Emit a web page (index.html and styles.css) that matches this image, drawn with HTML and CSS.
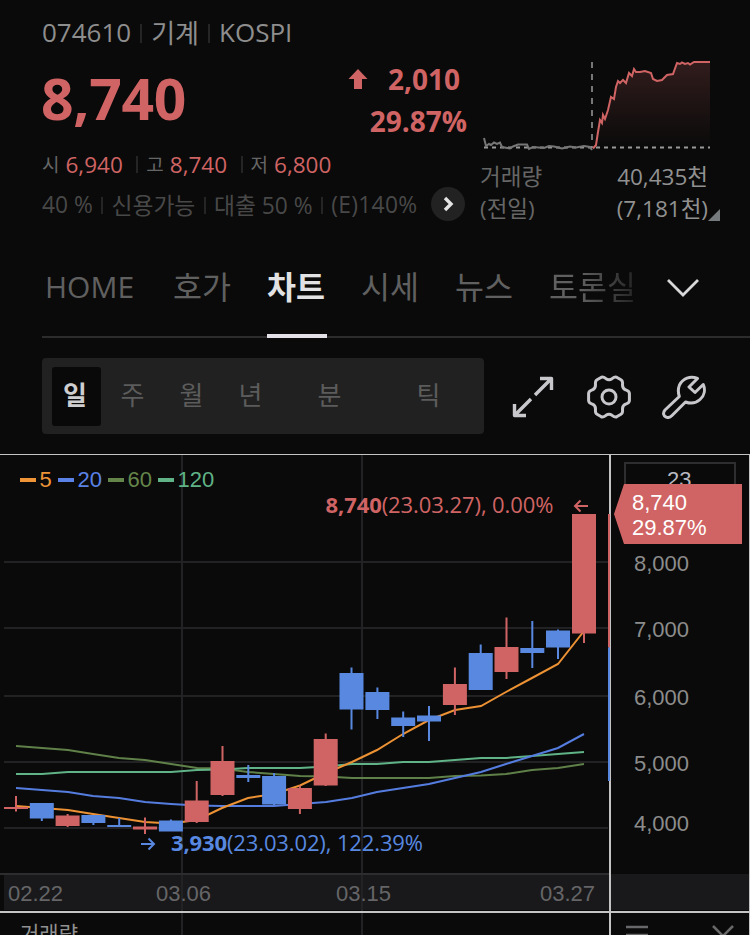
FILE: index.html
```
<!DOCTYPE html>
<html lang="ko">
<head>
  <meta charset="utf-8">
  <meta name="viewport" content="width=device-width, initial-scale=1">
  <title>074610</title>
  <link rel="stylesheet" href="styles.css">
</head>
<body>
  <div class="wrap">

    <div class="quote">
      <div class="quote-left">
        <div class="row info">
          <span>074610</span><i class="bar"></i><span class="kr">기계</span><i class="bar"></i><span>KOSPI</span>
        </div>
        <div class="row price">
          <strong>8,740</strong>
          <div class="change">
            <div class="diff">
              <svg width="20" height="20" viewBox="0 0 20 20"><path d="M10 0L19.500 10H14V20H6V10H.5z" fill="#d06464"/></svg>
              <span>2,010</span>
            </div>
            <div class="rate">29.87%</div>
          </div>
        </div>
        <div class="row ohl">
          <em>시</em><span>6,940</span><i class="bar"></i><em>고</em><span>8,740</span><i class="bar"></i><em>저</em><span>6,800</span>
        </div>
        <div class="row credit">
          <span>40 %</span><i class="bar"></i><span>신용가능</span><i class="bar"></i><span>대출 50 %</span><i class="bar"></i><span class="last">(E)140%</span>
          <button class="more"><svg width="34" height="34" viewBox="0 0 34 34"><path d="M14 11l6 6-6 6" fill="none" stroke="#e4e4e4" stroke-width="3.400"/></svg></button>
        </div>
      </div>

      <div class="quote-right">
        <svg class="mini" width="240" height="104" viewBox="480 56 240 104">
          <defs>
            <linearGradient id="fade" x1="0" y1="0" x2="0" y2="1">
              <stop offset="0" stop-color="#d06464" stop-opacity=".2"/>
              <stop offset="1" stop-color="#d06464" stop-opacity="0"/>
            </linearGradient>
          </defs>
          <path d="M596 148L599 128 602 121 604 115 606 118 609 107 612 97 615 99 618 81 622 83 626 81 629 73 632 75 634 69 637 72 644 71 651 73 654 80 662 80 667 74 673 74 677 63 684 64 689 64 694 62H710V148z" fill="url(#fade)"/>
          <path d="M592 62V148" stroke="#777" stroke-width="2" stroke-dasharray="6 6"/>
          <path d="M484 147.500H710" stroke="#999" stroke-width="2" stroke-dasharray="4 4"/>
          <path d="M484 138L486 146 489 144 491 145 494 142.500 497 144 500 142.500 502 147 510 148.500 513 146.500 518 144.500H527L529 149 533 147 544 148 549 146 554 146.500 562 148.500 570 146.500 576 147.500 584 146 590 147 592 150" fill="none" stroke="#777" stroke-width="2"/>
          <path d="M593 148.500L596 145 598 132 600 120 602 123 603 115 605 119 608 110 611 97 614 99 616 87 618 81 620 83 623 80 626 83 629 73 632 76 634 69 636 72 640 72 645 71 651 73 653 79 657 81 662 80 667 75 673 74 677 63 680 64 682 62.500 685 64 688 63 690 64.500 694 62H710" fill="none" stroke="#d06464" stroke-width="2"/>
        </svg>
        <div class="vol"><span>거래량</span><b>40,435천</b></div>
        <div class="vol prev"><span>(전일)</span><b>(7,181천)</b><svg width="12" height="12" viewBox="0 0 12 12"><path d="M12 0V12H0z" fill="#777a7c"/></svg></div>
      </div>
    </div>

    <div class="tabs">
      <a class="home">HOME</a>
      <a>호가</a>
      <a class="on">차트</a>
      <a>시세</a>
      <a>뉴스</a>
      <a class="last">토론실</a>
      <svg class="expand" width="34" height="20" viewBox="0 0 34 20"><path d="M2 2L17 17 32 2" fill="none" stroke="#d8d8da" stroke-width="2.800"/></svg>
    </div>

    <div class="tools">
      <div class="period">
        <span class="on">일</span><span>주</span><span>월</span><span>년</span><span class="wide">분</span><span class="wide tick">틱</span>
      </div>
      <svg class="icon" width="44" height="44" viewBox="0 0 44 44">
        <path d="M29 3.500H40.500V15M39.500 4.500L24 20M3.500 29V40.500H15M4.500 39.500L20 24" stroke-width="3.400"/>
      </svg>
      <svg class="icon" width="44" height="44" viewBox="0 0 44 44">
        <circle cx="22" cy="22" r="7"/>
        <path d="M14 2.500C15.500 1.200 17.500 2.500 19 3.700Q22 5.600 25 3.700C26.500 2.500 28.500 1.200 30 2.500L34 4.800C36 5.700 35.600 8 35.500 10Q35.500 13.500 38.500 14.800C40.500 15.500 42.400 16 42.400 18.500V25.500C42.400 28 40.500 28.500 38.500 29.200Q35.500 30.500 35.500 34C35.600 36 36 38.300 34 39.200L30 41.500C28.500 42.800 26.500 41.500 25 40.300Q22 38.400 19 40.300C17.500 41.500 15.500 42.800 14 41.500L10 39.200C8 38.300 8.400 36 8.500 34Q8.500 30.500 5.500 29.200C3.500 28.500 1.600 28 1.600 25.500V18.500C1.600 16 3.500 15.500 5.500 14.800Q8.500 13.500 8.500 10C8.400 8 8 5.700 10 4.800z"/>
      </svg>
      <svg class="icon" width="44" height="44" viewBox="0 0 44 44">
        <path d="M35.500 3.500C28 .5 21 3.500 17.500 10C16 13.500 16 17.500 17.300 21.500L3 35C.5 38 1.500 41 4 42C6 43 8.500 42 10 40.500L23.500 27C29 29 34 28.200 38 24.500C42.500 20.500 43.500 14.500 41.200 9.500L33 17.500L27 12z"/>
      </svg>
    </div>

    <svg class="chart" width="750" height="481" viewBox="0 454 750 481">
      <!-- date strip -->
      <rect x="4" y="874" width="745" height="36" fill="#19191b"/>

      <!-- grid -->
      <path class="grid" d="M4 562H608M4 628H608M4 696H608M4 762H608M4 828H608M182 455V935M362 455V935"/>
      <path d="M0 874H609" stroke="#2d2d2f" stroke-width="2"/>

      <!-- frame -->
      <path d="M0 454.500H750M749.500 454V935" stroke="#c4c4c4"/>
      <path d="M0 912H750M610 455V935" stroke="#c4c4c4" stroke-width="2"/>

      <!-- moving averages -->
      <polyline class="ma c60" points="16,746 42,748 68,750 93,754 119,758 145,760 171,764 197,768 222,768.500 248,772 274,774 300,776 326,776.500 352,778 377,778 403,778 429,778 455,776 481,775.500 506,774 532,770 558,768 584,764"/>
      <polyline class="ma c120" points="16,774 42,774 68,772 171,772 197,770 222,769.500 248,768 300,768 326,766.500 352,764 377,764 403,762 429,762 455,760 481,758 506,758 532,756 558,754 584,752"/>
      <polyline class="ma c20" points="16,788 42,790 68,792 93,796 119,798 145,802 171,804 197,805.500 222,806 274,806 300,804 326,802 352,798 377,792 403,788 429,784 455,778 481,772 506,764 532,756 558,748 584,734"/>
      <polyline class="ma c5" points="16,806 42,808 68,810 93,814 119,818 145,822 171,823.500 197,820 222,808 248,798 274,794 300,785.500 326,773 352,762 377,750 403,734 429,720 455,710 481,706 506,692 532,678 558,664 584,631"/>

      <!-- candles -->
      <path class="wick up" d="M16 796V811.500M67.600 814V827M145 817.500V834M196.700 781V823M222.500 746V796M299.900 785.500V814M325.700 733.500V786M454.900 667.500V715M506.500 617.500V679M584 514V643"/>
      <path class="wick down" d="M41.800 803V821M93.400 815V825M119.200 818V827M170.900 819.500V831M248.300 765V782M274.100 773V805M351.500 667.500V729.500M377.400 687.500V719M403.200 711.500V737M429 706V741M480.700 644.500V690M532.300 621V668M558 629.500V659"/>
      <path class="up" d="M4 807h24v2H4zM55.600 815.500h24V826h-24zM133 826.500h24v3h-24zM184.700 800.500h24V822h-24zM210.500 761h24v34h-24zM287.900 788h24v21h-24zM313.700 739h24v46.500h-24zM442.900 684h24v21h-24zM494.500 647h24v25h-24zM572 514h24V633.500h-24z"/>
      <path class="down" d="M29.800 803h24V818.500h-24zM81.400 815h24v8h-24zM107.200 825h24v2h-24zM158.900 820.500h24v11h-24zM236.300 775h24v3h-24zM262.100 776h24v28.500h-24zM339.500 673h24v36.500h-24zM365.400 692h24v18h-24zM391.200 717.500h24v8.500h-24zM417 715.500h24v6h-24zM468.700 653h24v37h-24zM520.300 648h24v5h-24zM546 630.500h24v17h-24z"/>
      <rect class="up" x="608" y="514" width="2" height="133.500"/>
      <rect class="down" x="608" y="647.500" width="2" height="133.500"/>

      <!-- legend -->
      <path d="M20 480h16" stroke="#f09537" stroke-width="4"/>
      <path d="M58 480h16" stroke="#5a82e6" stroke-width="4"/>
      <path d="M108 480h16" stroke="#64854a" stroke-width="4"/>
      <path d="M158 480h16" stroke="#5fb386" stroke-width="4"/>
      <g class="num">
        <text x="39.500" y="487" fill="#f09537">5</text>
        <text x="77.500" y="487" fill="#5a82e6">20</text>
        <text x="127.500" y="487" fill="#64854a">60</text>
        <text x="177.500" y="487" fill="#5fb386">120</text>
      </g>

      <!-- high / low -->
      <text class="mark up" x="325.500" y="513" textLength="228"><tspan class="bold">8,740</tspan>(23.03.27), 0.00%</text>
      <path d="M588 506H575M580.500 500.500L575 506l5.500 5.500" fill="none" stroke="#d06464" stroke-width="2"/>
      <text class="mark down" x="171" y="851" textLength="252"><tspan class="bold">3,930</tspan>(23.03.02), 122.39%</text>
      <path d="M141 844H154M148.500 838.500L154 844l-5.500 5.500" fill="none" stroke="#5888e0" stroke-width="2"/>

      <!-- price axis -->
      <path d="M625 490V463H735V490" fill="none" stroke="#2e2e30" stroke-width="2"/>
      <g class="num axis">
        <text x="667" y="487" fill="#b8b8c0">23</text>
        <text x="634" y="571">8,000</text>
        <text x="634" y="637">7,000</text>
        <text x="634" y="705">6,000</text>
        <text x="634" y="771">5,000</text>
        <text x="634" y="831">4,000</text>
      </g>
      <path class="up" d="M614 514L624 484H742V544H624z"/>
      <g class="num" fill="#fff">
        <text x="632" y="510">8,740</text>
        <text x="632" y="535">29.87%</text>
      </g>

      <g class="num date">
        <text x="8" y="901">02.22</text>
        <text x="156" y="901">03.06</text>
        <text x="336" y="901">03.15</text>
        <text x="540" y="901">03.27</text>
      </g>

      <!-- volume pane -->
      <text class="pane" x="20" y="941">거래량</text>
      <path d="M626 927h22M626 935h22M713 926l10 10 10-10" fill="none" stroke="#68686a" stroke-width="2.500"/>
    </svg>

  </div>
</body>
</html>
```
FILE: styles.css
```
* {
  margin: 0;
  padding: 0;
  box-sizing: border-box;
}

body {
  background: #0a0a0a;
  font-family: "Open Sans", "Noto Sans CJK KR", sans-serif;
  color: #8e8e8e;
  overflow: hidden;
}

i, em {
  font-style: normal;
}

svg {
  display: block;
  flex: none;
}

.wrap {
  width: 750px;
  height: 935px;
  overflow: hidden;
}

/* quote */

.quote {
  display: flex;
  height: 238px;
  padding-left: 42px;
}

.quote-left {
  width: 438px;
  padding-top: 12px;
}

.row {
  display: flex;
  align-items: center;
  height: 40px;
  white-space: nowrap;
}

.bar {
  width: 2px;
  height: 19px;
  background: #252525;
}

.info {
  font-size: 26px;
}

.info .bar {
  margin: 2px 9px 0;
}

.price {
  height: 92px;
  justify-content: space-between;
  padding-right: 13px;
  color: #d06464;
  font-weight: 700;
}

.price strong {
  font-size: 57px;
  font-weight: 700;
  letter-spacing: -.3px;
  margin-left: -1px;
}

.change {
  padding-top: 3px;
  font-size: 28px;
  line-height: 42px;
  text-align: right;
}

.diff {
  display: flex;
  align-items: center;
  gap: 20px;
  padding-right: 7px;
}

.ohl {
  font-size: 22.5px;
  color: #d06464;
}

.ohl em {
  font-size: 19px;
  color: #666;
  margin-right: 6px;
}

.ohl .bar {
  height: 17px;
  margin: 0 8px 0 13.5px;
}

.credit {
  font-size: 22.8px;
  color: #484848;
}

.credit .bar {
  height: 17px;
  margin: 2px 8.3px 0;
}

.credit .last {
  letter-spacing: .3px;
}

.more {
  border: 0;
  background: #222;
  width: 34px;
  height: 34px;
  border-radius: 50%;
  margin-left: 14px;
}

.quote-right {
  width: 240px;
  padding-top: 56px;
}

.vol {
  display: flex;
  justify-content: space-between;
  height: 32px;
  line-height: 34px;
  font-size: 22.5px;
  padding-right: 12px;
  color: #666;
}

.vol b {
  font-weight: 400;
  color: #919191;
}

.prev {
  padding-right: 0;
}

.prev b {
  margin-left: auto;
}

.prev svg {
  margin-top: 17px;
}

/* tabs */

.tabs {
  display: flex;
  height: 100px;
  margin-left: 42px;
  padding-left: 3px;
  border-bottom: 2px solid #2c2c2c;
  font-size: 31.5px;
  line-height: 98px;
  color: #606060;
  white-space: nowrap;
}

.tabs a {
  width: 60px;
  height: 100px;
  margin-right: 34px;
}

.tabs .home {
  width: 88px;
  margin-right: 40px;
  font-size: 30px;
}

.tabs .on {
  color: #e2e2e4;
  font-weight: 700;
  border-bottom: 4px solid #e4e0e8;
}

.tabs .last {
  width: 90px;
  margin-right: 27px;
  background: linear-gradient(90deg, #606060 35%, #202020);
  -webkit-background-clip: text;
  background-clip: text;
  color: transparent;
}

.expand {
  margin-top: 40px;
}

/* toolbar */

.tools {
  display: flex;
  align-items: center;
  height: 116px;
  padding-left: 42px;
}

.period {
  display: flex;
  align-items: center;
  width: 442px;
  height: 76px;
  margin-right: 27px;
  padding-left: 10px;
  background: #212121;
  border-radius: 4px;
  font-size: 26px;
  line-height: 56px;
  text-align: center;
  color: #5c5c5c;
}

.period span {
  flex: none;
  width: 59px;
  height: 59px;
}

.period .on {
  width: 49px;
  margin-right: 2px;
  padding-right: 3px;
  background: #090909;
  border-radius: 3px;
  color: #ceced0;
  font-weight: 700;
}

.period .wide {
  width: 99px;
}

.icon {
  margin: 2px 31.5px 0 0;
  fill: none;
  stroke: #c8c8cc;
  stroke-width: 3;
  stroke-linejoin: round;
}

/* chart */

.up {
  fill: #d06464;
}

.down {
  fill: #5888e0;
}

.wick {
  stroke-width: 2;
}

.wick.up {
  stroke: #d06464;
}

.wick.down {
  stroke: #5888e0;
}

.grid {
  stroke: #222224;
  stroke-width: 2;
}

.ma {
  fill: none;
  stroke-width: 2;
}

.c5 { stroke: #ec9234; }
.c20 { stroke: #557de0; }
.c60 { stroke: #5f8048; }
.c120 { stroke: #5fb386; }

.num {
  font: 22px "Liberation Sans", Arial, sans-serif;
}

.axis {
  fill: #8c8c8c;
}

.date {
  fill: #656567;
}

.mark {
  font-size: 22px;
}

.bold {
  font-weight: 700;
}

.pane {
  font-size: 21px;
  fill: #919191;
}
```
